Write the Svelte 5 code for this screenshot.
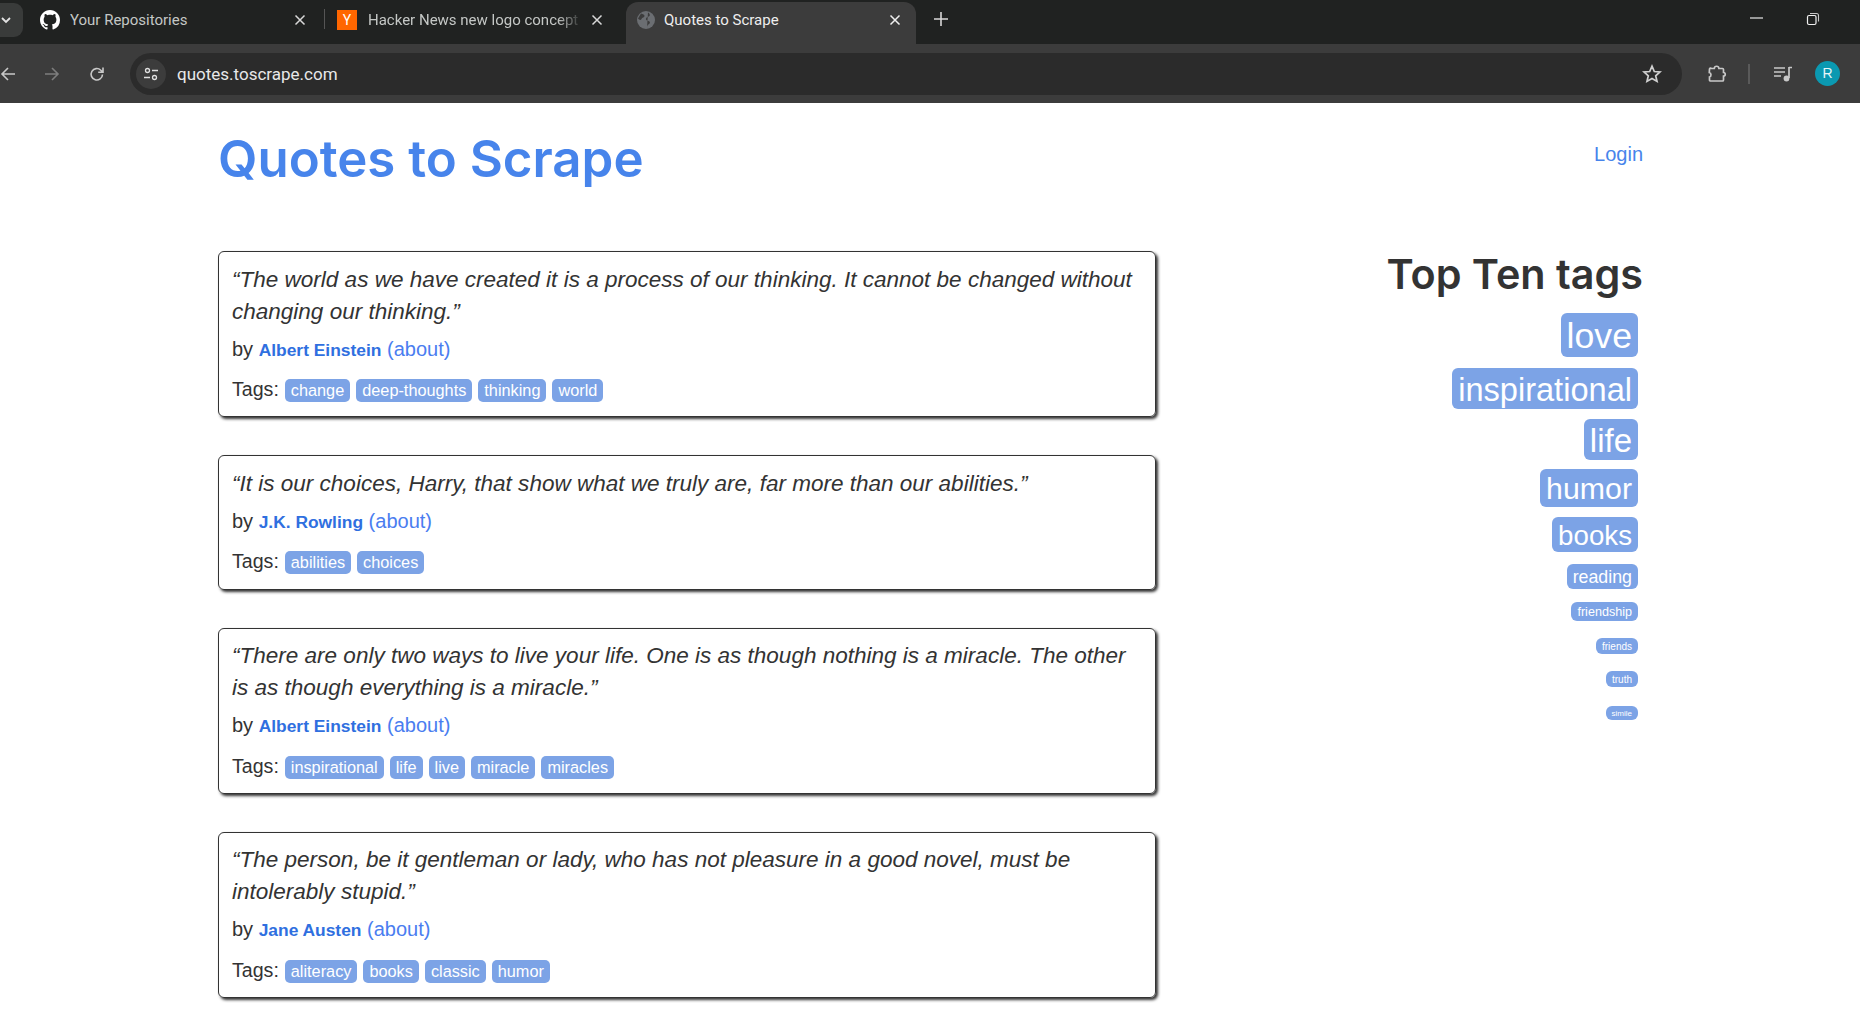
<script>
  const quotes = [
    {
      text: '“The world as we have created it is a process of our thinking. It cannot be changed without changing our thinking.”',
      author: 'Albert Einstein',
      tags: ['change', 'deep-thoughts', 'thinking', 'world']
    },
    {
      text: '“It is our choices, Harry, that show what we truly are, far more than our abilities.”',
      author: 'J.K. Rowling',
      tags: ['abilities', 'choices']
    },
    {
      text: '“There are only two ways to live your life. One is as though nothing is a miracle. The other is as though everything is a miracle.”',
      author: 'Albert Einstein',
      tags: ['inspirational', 'life', 'live', 'miracle', 'miracles']
    },
    {
      text: '“The person, be it gentleman or lady, who has not pleasure in a good novel, must be intolerably stupid.”',
      author: 'Jane Austen',
      tags: ['aliteracy', 'books', 'classic', 'humor']
    }
  ];

  const topTags = [
    { name: 'love', size: 35.7, height: 44, gap: 11 },
    { name: 'inspirational', size: 32.6, height: 41, gap: 10 },
    { name: 'life', size: 33, height: 41, gap: 9 },
    { name: 'humor', size: 30.3, height: 38, gap: 10 },
    { name: 'books', size: 27.7, height: 35, gap: 12 },
    { name: 'reading', size: 17.8, height: 25, gap: 13 },
    { name: 'friendship', size: 12.6, height: 19, gap: 17 },
    { name: 'friends', size: 10, height: 16, gap: 17 },
    { name: 'truth', size: 10, height: 16, gap: 19 },
    { name: 'simile', size: 8, height: 14, gap: 0 }
  ];
</script>

<div class="window">
  <div class="tabstrip">
    <div class="tab-search">
      <svg width="12" height="12" viewBox="0 0 12 12"><path d="M2 4l4 4 4-4" fill="none" stroke="#e3e3e3" stroke-width="1.8"/></svg>
    </div>
    <div class="tab first">
      <svg class="favicon" width="20" height="20" viewBox="0 0 16 16"><path fill="#fff" d="M8 0C3.58 0 0 3.58 0 8c0 3.54 2.29 6.53 5.47 7.59.4.07.55-.17.55-.38 0-.19-.01-.82-.01-1.49-2.01.37-2.53-.49-2.69-.94-.09-.23-.48-.94-.82-1.13-.28-.15-.68-.52-.01-.53.63-.01 1.08.58 1.23.82.72 1.21 1.87.87 2.33.66.07-.52.28-.87.51-1.07-1.78-.2-3.64-.89-3.64-3.95 0-.87.31-1.59.82-2.15-.08-.2-.36-1.02.08-2.12 0 0 .67-.21 2.2.82.64-.18 1.32-.27 2-.27s1.36.09 2 .27c1.53-1.04 2.2-.82 2.2-.82.44 1.1.16 1.92.08 2.12.51.56.82 1.27.82 2.15 0 3.07-1.87 3.75-3.65 3.95.29.25.54.73.54 1.48 0 1.07-.01 1.93-.01 2.2 0 .21.15.46.55.38A8.01 8.01 0 0 0 16 8c0-4.42-3.58-8-8-8z"/></svg>
      <span class="tab-title">Your Repositories</span>
      <svg class="close" width="12" height="12" viewBox="0 0 12 12"><path d="M1.5 1.5l9 9m0-9l-9 9" stroke="#d8d8d8" stroke-width="1.5"/></svg>
    </div>
    <div class="tab-sep"></div>
    <div class="tab second">
      <div class="yc">Y</div>
      <span class="tab-title faded">Hacker News new logo concept</span>
      <svg class="close" width="12" height="12" viewBox="0 0 12 12"><path d="M1.5 1.5l9 9m0-9l-9 9" stroke="#d8d8d8" stroke-width="1.5"/></svg>
    </div>
    <div class="tab active">
      <svg class="favicon globe" width="20" height="20" viewBox="0 0 20 20"><circle cx="10" cy="10" r="9" fill="#6b6e72"/><path d="M5 3.500c2 .5 3.500 1 3.500 2.500S6 7.500 5.500 9 3 10 2 8.500M11 18c0-2 .5-3 2-4s1-2.500-.5-3-3-1-2.500-2.500S12.500 7 13.500 6 13 3 12 2.500" fill="#3c3c3c"/></svg>
      <span class="tab-title bright">Quotes to Scrape</span>
      <svg class="close" width="12" height="12" viewBox="0 0 12 12"><path d="M1.5 1.5l9 9m0-9l-9 9" stroke="#f0f0f0" stroke-width="1.5"/></svg>
    </div>
    <svg class="newtab" width="14" height="14" viewBox="0 0 14 14"><path d="M7 0v14M0 7h14" stroke="#d8d8d8" stroke-width="1.6"/></svg>
    <div class="window-controls">
      <svg width="14" height="14" viewBox="0 0 14 14"><path d="M0 6h13" stroke="#e8e8e8" stroke-width="1.2"/></svg>
      <svg width="14" height="14" viewBox="0 0 14 14"><rect x="1.500" y="3.500" width="8.500" height="9" rx="1.500" fill="none" stroke="#f0f0f0" stroke-width="1.200"/><path d="M4 1.500h6.500a2 2 0 0 1 2 2v6" fill="none" stroke="#c8c8c8" stroke-width="1.100"/></svg>
    </div>
  </div>

  <div class="toolbar">
    <svg class="back" width="16" height="16" viewBox="0 0 16 16"><path d="M15 8H2M8 2L2 8l6 6" fill="none" stroke="#c8c8c8" stroke-width="1.600"/></svg>
    <svg class="forward" width="16" height="16" viewBox="0 0 16 16"><path d="M1 8h13M8 2l6 6-6 6" fill="none" stroke="#7d7d7d" stroke-width="1.600"/></svg>
    <svg class="reload" width="18" height="18" viewBox="0 0 18 18"><path d="M14.500 9.500a5.700 5.700 0 1 1-1.700-4.300L15 7.300M15 2.500v4.800h-4.800" fill="none" stroke="#c8c8c8" stroke-width="1.600"/></svg>
    <div class="omnibox">
      <div class="site-info">
        <svg width="18" height="18" viewBox="0 0 18 18"><circle cx="5.500" cy="5.500" r="2" fill="none" stroke="#e0e0e0" stroke-width="1.300"/><circle cx="12.500" cy="12.500" r="2" fill="none" stroke="#e0e0e0" stroke-width="1.300"/><path d="M10 5.500h6M2 12.500h6" stroke="#e0e0e0" stroke-width="1.300"/></svg>
      </div>
      <span class="url">quotes.toscrape.com</span>
      <svg class="star" width="20" height="20" viewBox="0 0 20 20"><path d="M10 2.200l2.300 5.300 5.700.5-4.300 3.800 1.300 5.600L10 14.500l-5 2.900 1.300-5.600L2 8l5.700-.5z" fill="none" stroke="#d0d0d0" stroke-width="1.700"/></svg>
    </div>
    <svg class="ext" width="20" height="20" viewBox="0 0 20 20"><path d="M3.500 4.500h3.800c.2-3 4.400-3 4.600 0h3.600a1 1 0 0 1 1 1v3c2.300 0 2.300 3.500 0 3.500v4a1 1 0 0 1-1 1H3.500a1 1 0 0 1-1-1v-3c2-.3 2-4-.2-4.500l.2-3.500a1 1 0 0 1 1-1z" fill="none" stroke="#c8c8c8" stroke-width="1.700"/></svg>
    <div class="tool-sep"></div>
    <svg class="media" width="20" height="20" viewBox="0 0 20 20"><path d="M1 4h11M1 8h11M1 12h7" stroke="#c8c8c8" stroke-width="1.700"/><path d="M16 3.500h3M16 3v11" stroke="#c8c8c8" stroke-width="1.700"/><circle cx="13.500" cy="14.500" r="2.900" fill="#c8c8c8"/></svg>
    <div class="avatar">R</div>
  </div>

  <main class="page">
    <header class="header">
      <h1>Quotes to Scrape</h1>
      <a class="login" href="#login">Login</a>
    </header>
    <div class="columns">
      <div class="quotes">
        {#each quotes as quote}
          <div class="quote">
            <div class="text">{quote.text}</div>
            <div class="by">by <b class="author">{quote.author}</b> <a href="#about">(about)</a></div>
            <div class="tags">
              <span class="tags-label">Tags:</span>
              {#each quote.tags as tag}
                <a class="tag" href="#tag">{tag}</a>
              {/each}
            </div>
          </div>
        {/each}
      </div>
      <aside class="side">
        <h2>Top Ten tags</h2>
        <div class="tag-cloud">
          {#each topTags as tag}
            <a class="cloud-tag" href="#tag" style="font-size: {tag.size}px; height: {tag.height}px; line-height: {tag.height + 2}px; margin-bottom: {tag.gap}px">{tag.name}</a>
          {/each}
        </div>
      </aside>
    </div>
  </main>
</div>

<style>
  :global(body) {
    margin: 0;
    background: #fff;
    overflow: hidden;
  }

  .window {
    width: 1860px;
    height: 1010px;
    overflow: hidden;
    font-family: "Liberation Sans", Arial, sans-serif;
    color: #333;
  }

  .tabstrip {
    display: flex;
    align-items: center;
    height: 44px;
    background: #202221;
    color: #c4c7c5;
    font-family: Roboto, "Liberation Sans", sans-serif;
    font-size: 15px;
  }

  .tab-search {
    display: flex;
    align-items: center;
    justify-content: flex-start;
    width: 23px;
    height: 34px;
    margin-bottom: 4px;
    background: #393b3a;
    border-radius: 0 9px 9px 0;
    flex: none;
  }

  .tab {
    display: flex;
    align-items: center;
    height: 42px;
    margin-top: 2px;
    padding-bottom: 6px;
    box-sizing: border-box;
    flex: none;
  }

  .tab.first {
    width: 301px;
    padding-left: 17px;
    padding-right: 18px;
  }

  .tab.second {
    width: 301px;
    padding-left: 12px;
    padding-right: 23px;
  }

  .tab-sep {
    width: 1px;
    height: 20px;
    margin-bottom: 6px;
    background: #555;
    flex: none;
  }

  .tab.active {
    width: 290px;
    padding-left: 10px;
    padding-right: 15px;
    background: #3c3c3c;
    border-radius: 12px 12px 0 0;
    color: #eee;
  }

  .favicon {
    flex: none;
    margin-right: 10px;
  }

  .favicon.globe {
    margin-right: 8px;
  }

  .yc {
    flex: none;
    width: 20px;
    height: 20px;
    margin-right: 11px;
    background: #ff6600;
    color: #fff;
    font-size: 14px;
    line-height: 20px;
    text-align: center;
  }

  .tab-title {
    flex: 1;
    overflow: hidden;
    white-space: nowrap;
  }

  .tab-title.faded {
    margin-right: 8px;
    -webkit-mask-image: linear-gradient(to right, #000 88%, transparent);
    mask-image: linear-gradient(to right, #000 88%, transparent);
  }

  .tab-title.bright {
    color: #eee;
  }

  .close {
    flex: none;
  }

  .newtab {
    margin: 0 0 6px 18px;
    flex: none;
  }

  .window-controls {
    display: flex;
    gap: 42px;
    margin: 0 40px 6px auto;
  }

  .toolbar {
    display: flex;
    align-items: center;
    height: 59px;
    background: #3c3c3c;
  }

  .back {
    flex: none;
  }

  .forward {
    margin-left: 28px;
    flex: none;
  }

  .reload {
    margin-left: 28px;
    flex: none;
  }

  .omnibox {
    display: flex;
    align-items: center;
    width: 1552px;
    height: 42px;
    margin-left: 24px;
    background: #2b2b2b;
    border-radius: 21px;
    flex: none;
  }

  .site-info {
    display: flex;
    align-items: center;
    justify-content: center;
    width: 30px;
    height: 30px;
    margin-left: 6px;
    border-radius: 50%;
    background: #3c3c3c;
  }

  .url {
    margin-left: 11px;
    font-family: Roboto, "Liberation Sans", sans-serif;
    font-size: 17px;
    color: #e8e8e8;
  }

  .star {
    margin-left: auto;
    margin-right: 20px;
  }

  .ext {
    margin-left: 25px;
    flex: none;
  }

  .tool-sep {
    width: 2px;
    height: 20px;
    margin-left: 21px;
    background: #5a5a5a;
    flex: none;
  }

  .media {
    margin-left: 23px;
    flex: none;
  }

  .avatar {
    width: 25px;
    height: 25px;
    margin-left: 22px;
    border-radius: 50%;
    background: #0b99b1;
    color: #e8f6f8;
    font-size: 14px;
    line-height: 25px;
    text-align: center;
    flex: none;
  }

  .page {
    width: 1425px;
    margin-left: 218px;
    background: #fff;
  }

  .header {
    display: flex;
    justify-content: space-between;
    height: 148px;
  }

  h1 {
    margin: 25px 0 0;
    font-family: Inter, "Liberation Sans", sans-serif;
    font-size: 51px;
    line-height: 62px;
    font-weight: 600;
    color: #4784eb;
  }

  .login {
    margin-top: 37px;
    font-size: 20px;
    line-height: 28px;
    color: #4784eb;
    text-decoration: none;
  }

  .columns {
    display: flex;
    justify-content: space-between;
  }

  .quotes {
    display: flex;
    flex-direction: column;
    gap: 38px;
    width: 938px;
  }

  .quote {
    padding: 11.5px 13px 11.3px;
    border: 1px solid #333;
    border-radius: 6px;
    box-shadow: 2px 2px 3px #333;
    box-sizing: border-box;
  }

  .text {
    font-size: 22.52px;
    line-height: 32px;
    font-style: italic;
  }

  .by {
    margin-top: 5px;
    font-size: 20px;
    line-height: 32px;
  }

  .author {
    font-size: 17.4px;
    color: #2f6fe0;
  }

  .by a {
    color: #4a7df0;
    text-decoration: none;
  }

  .tags {
    margin-top: 7.5px;
    font-size: 19.6px;
    line-height: 32px;
  }

  .tags-label {
    margin-right: 0.5px;
  }

  .tag {
    display: inline-block;
    padding: 0 6px;
    height: 23px;
    margin-right: 6px;
    border-radius: 5px;
    background: #7ca3e6;
    color: #fff;
    font-size: 16.3px;
    line-height: 23px;
    text-decoration: none;
  }

  .side {
    width: 300px;
    text-align: right;
  }

  h2 {
    margin: -1px 0 15px;
    font-family: Inter, "Liberation Sans", sans-serif;
    font-size: 41.3px;
    line-height: 48px;
    font-weight: 600;
    color: #333;
  }

  .tag-cloud {
    display: flex;
    flex-direction: column;
    align-items: flex-end;
    padding-right: 5px;
  }

  .cloud-tag {
    padding: 0 6px;
    border-radius: 6px;
    background: #7ca3e6;
    color: #fff;
    text-decoration: none;
  }
</style>
